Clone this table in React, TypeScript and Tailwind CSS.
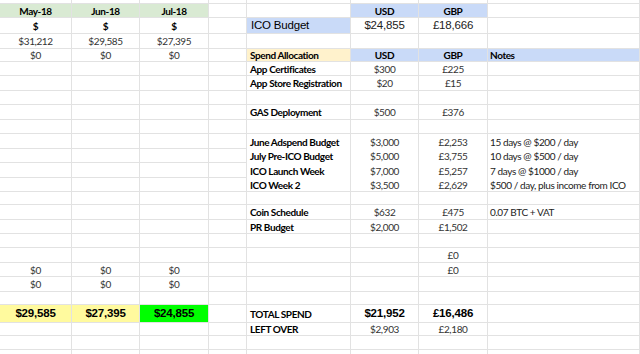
import React from "react";

type Cell = { t?: string; c?: string; nb?: boolean };

const arial = "font-['Liberation_Sans',Arial,sans-serif] tracking-[-0.2px] text-[11.5px]";
const num = "justify-center text-[#333]";
const lbl = "justify-start pl-[3px] font-bold text-black";
const head = "justify-center font-bold text-black";
const note = "justify-start pl-[2px] text-[#222]";
const blue = "bg-[#c9daf8]";
const green = "bg-[#d9ead3]";

const E: Cell = {};
const blank = (): Cell[] => [E, E, E, E, E, E, E, E];

const rows: Cell[][] = [
  blank(),
  [
    { t: "May-18", c: `${head} ${green}` },
    { t: "Jun-18", c: `${head} ${green}` },
    { t: "Jul-18", c: `${head} ${green}` },
    E,
    E,
    { t: "USD", c: `${head} ${blue}` },
    { t: "GBP", c: `${head} ${blue}` },
    E,
  ],
  [
    { t: "$", c: head },
    { t: "$", c: head },
    { t: "$", c: head },
    E,
    { t: "ICO Budget", c: `justify-start pl-[4px] text-black ${arial} ${blue}` },
    { t: "$24,855", c: `justify-center text-[#222] ${arial}` },
    { t: "£18,666", c: `justify-center text-[#222] ${arial}` },
    E,
  ],
  [{ t: "$31,212", c: num }, { t: "$29,585", c: num }, { t: "$27,395", c: num }, E, E, E, E, E],
  [
    { t: "$0", c: num },
    { t: "$0", c: num },
    { t: "$0", c: num },
    E,
    { t: "Spend Allocation", c: `${lbl} bg-[#fff2cc]` },
    { t: "USD", c: `${head} ${blue}` },
    { t: "GBP", c: `${head} ${blue}` },
    { t: "Notes", c: `justify-start pl-[2px] font-bold text-black ${blue}` },
  ],
  [E, E, E, E, { t: "App Certificates", c: lbl }, { t: "$300", c: num }, { t: "£225", c: num }, E],
  [E, E, E, E, { t: "App Store Registration", c: lbl }, { t: "$20", c: num }, { t: "£15", c: num }, E],
  blank(),
  [E, E, E, E, { t: "GAS Deployment", c: lbl }, { t: "$500", c: num }, { t: "£376", c: num }, E],
  blank(),
  [E, E, E, E, { t: "June Adspend Budget", c: lbl, nb: true }, { t: "$3,000", c: num, nb: true }, { t: "£2,253", c: num, nb: true }, { t: "15 days @ $200 / day", c: note, nb: true }],
  [E, E, E, E, { t: "July Pre-ICO Budget", c: lbl, nb: true }, { t: "$5,000", c: num, nb: true }, { t: "£3,755", c: num, nb: true }, { t: "10 days @ $500 / day", c: note, nb: true }],
  [E, E, E, E, { t: "ICO Launch Week", c: lbl, nb: true }, { t: "$7,000", c: num, nb: true }, { t: "£5,257", c: num, nb: true }, { t: "7 days @ $1000 / day", c: note, nb: true }],
  [E, E, E, E, { t: "ICO Week 2", c: lbl }, { t: "$3,500", c: num }, { t: "£2,629", c: num }, { t: "$500 / day, plus income from ICO", c: note }],
  blank(),
  [E, E, E, E, { t: "Coin Schedule", c: lbl }, { t: "$632", c: num }, { t: "£475", c: num }, { t: "0.07 BTC + VAT", c: note }],
  [E, E, E, E, { t: "PR Budget", c: lbl }, { t: "$2,000", c: num }, { t: "£1,502", c: num }, E],
  blank(),
  [E, E, E, E, E, E, { t: "£0", c: num }, E],
  [{ t: "$0", c: num }, { t: "$0", c: num }, { t: "$0", c: num }, E, E, E, { t: "£0", c: num }, E],
  [{ t: "$0", c: num }, { t: "$0", c: num }, { t: "$0", c: num }, E, E, E, E, E],
  blank(),
  [
    { t: "$29,585", c: `justify-center font-bold text-black ${arial} bg-[#fffa9e]` },
    { t: "$27,395", c: `justify-center font-bold text-black ${arial} bg-[#fffa9e]` },
    { t: "$24,855", c: `justify-center font-bold text-black ${arial} bg-[#00ff00]` },
    E,
    { t: "TOTAL SPEND", c: lbl },
    { t: "$21,952", c: `justify-center font-bold text-black ${arial}` },
    { t: "£16,486", c: `justify-center font-bold text-black ${arial}` },
    E,
  ],
  [E, E, E, E, { t: "LEFT OVER", c: lbl }, { t: "$2,903", c: num }, { t: "£2,180", c: num }, E],
  blank(),
  blank(),
];

export default function App() {
  return (
    <div className="w-[640px] h-[354px] overflow-hidden bg-white font-['Lato','Open_Sans',sans-serif] text-[10px] tracking-[-0.4px] leading-none">
      <div className="grid grid-cols-[72px_68px_69px_38px_104px_68px_69px_152px] grid-rows-[4px_14px_16px_15px_13px_14px_15px_14px_15px_14px_15px_14px_15px_14px_13px_15px_14px_14px_15px_14px_15px_13px_18px_13px_14px_20px]">
        {rows.map((row, r) =>
          row.map((cell, i) => (
            <div
              key={`${r}-${i}`}
              className={`flex items-center whitespace-nowrap overflow-visible border-r border-[#e2e2e2] ${
                cell.nb ? "" : "border-b"
              } ${cell.c ?? ""}`}
            >
              {cell.t}
            </div>
          ))
        )}
      </div>
    </div>
  );
}
